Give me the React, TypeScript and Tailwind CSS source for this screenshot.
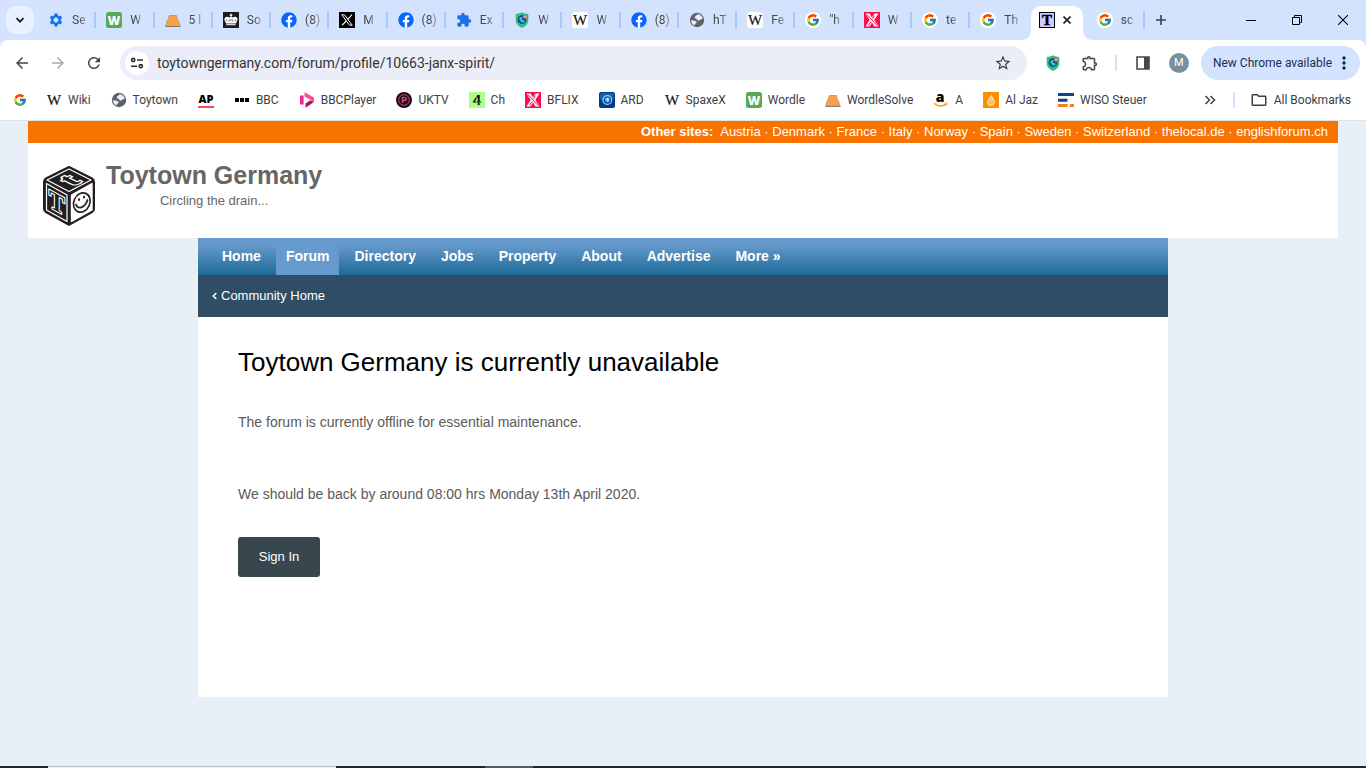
import type { ReactNode } from 'react';
import { FcGoogle } from 'react-icons/fc';
import { FaFacebook } from 'react-icons/fa';
import {
  MdArrowBack,
  MdArrowForward,
  MdExtension,
  MdOutlineExtension,
  MdOutlineFolder,
  MdRefresh,
  MdSettings,
  MdStarOutline,
} from 'react-icons/md';

type IconName =
  | 'settings'
  | 'wordle'
  | 'cone'
  | 'crown'
  | 'facebook'
  | 'x'
  | 'extension'
  | 'shield'
  | 'wikiTile'
  | 'wiki'
  | 'globe'
  | 'googleTile'
  | 'google'
  | 'bflix'
  | 'toytown'
  | 'ap'
  | 'bbc'
  | 'iplayer'
  | 'uktv'
  | 'channel4'
  | 'ard'
  | 'amazon'
  | 'aljazeera'
  | 'wiso';

function Svg({ children }: { children: ReactNode }) {
  return (
    <svg viewBox="0 0 16 16" className="w-4 h-4 shrink-0" aria-hidden="true">
      {children}
    </svg>
  );
}

function WikiLetter() {
  return (
    <text x="8" y="13" textAnchor="middle" fontFamily="Liberation Serif, serif" fontSize="15" stroke="#111" strokeWidth="0.2" fill="#111">
      W
    </text>
  );
}

const icons: Record<IconName, ReactNode> = {
  settings: <MdSettings className="w-4 h-4 shrink-0 text-[#1a73e8]" />,
  extension: <MdExtension className="w-4 h-4 shrink-0 text-[#1a73e8]" />,
  facebook: (
    <span className="w-4 h-4 shrink-0 rounded-full bg-white">
      <FaFacebook className="w-4 h-4 text-[#0866ff]" />
    </span>
  ),
  google: (
    <span className="w-4 h-4 shrink-0 flex items-center justify-center">
      <FcGoogle className="w-[14px] h-[14px]" />
    </span>
  ),
  googleTile: (
    <span className="w-4 h-4 shrink-0 flex items-center justify-center rounded-full bg-white">
      <FcGoogle className="w-[14px] h-[14px]" />
    </span>
  ),
  wordle: (
    <Svg>
      <rect width="16" height="16" rx="2.5" fill="#58a955" />
      <text x="8" y="12.5" textAnchor="middle" fontFamily="Open Sans, sans-serif" fontWeight="800" fontSize="12" fill="#fff">
        W
      </text>
    </Svg>
  ),
  cone: (
    <Svg>
      <path d="M4.3 3.5h7.2l1 5h.8l1.9 5.9H.7l1.6-5.9H3z" fill="#f9a14a" stroke="#c08a5a" strokeWidth="0.8" />
      <path d="M.5 14.5h15" stroke="#8a7b70" strokeWidth="1" />
    </Svg>
  ),
  crown: (
    <Svg>
      <rect width="16" height="16" fill="#1d1d1f" />
      <path d="M3 11.5 1.3 7.2C1.600 4.800 4.300 4 6.300 5.600L8 4.800l1.700.8c2-1.600 4.700-.8 5 1.600L13 11.500z" fill="#fff" />
      <path d="M8 1.800v3M6.700 3.100h2.600" stroke="#fff" strokeWidth="1.2" />
      <path d="M4.200 9.500 3.200 7.300M6.300 9.500V7.300M9.700 9.500V7.300M11.800 9.500l1-2.200M8 9V6.800" stroke="#1d1d1f" strokeWidth="0.6" />
      <path d="M3.3 12.7h9.4" stroke="#fff" strokeWidth="1" />
    </Svg>
  ),
  x: (
    <Svg>
      <rect width="16" height="16" fill="#000" />
      <path d="M2.8 2.8h2.700l7.700 10.400h-2.700z" fill="none" stroke="#fff" strokeWidth="1" />
      <path d="M13 2.600 8.800 7.300M7.200 9 3 13.400" stroke="#fff" strokeWidth="1.1" />
    </Svg>
  ),
  shield: (
    <Svg>
      <path d="M8 .3C6 1.500 3.800 2 1.700 2v6c0 4 2.800 6.500 6.300 7.900 3.500-1.400 6.300-3.900 6.300-7.900V2C12.200 2 10 1.500 8 .3z" fill="#2bc08b" />
      <circle cx="8" cy="7.7" r="4.4" fill="#1a4f7c" />
      <path d="M5 7c1-2 2.500-2.500 3.500-1.800.6.700-1 1.300-.6 2.300.4.900 2.400.3 2.600 1.400.1 1-1.400 1.700-2.400 1.600C6.500 10.300 6.900 8.300 5 7z" fill="#37c5e8" />
      <circle cx="11" cy="4.8" r="2" fill="#f0625f" />
      <path d="M9.9 4.8h2.2" stroke="#fff" strokeWidth="0.7" />
    </Svg>
  ),
  wikiTile: (
    <Svg>
      <rect width="16" height="16" rx="3" fill="#fff" />
      <WikiLetter />
    </Svg>
  ),
  wiki: (
    <Svg>
      <WikiLetter />
    </Svg>
  ),
  globe: (
    <Svg>
      <circle cx="8" cy="8" r="7.2" fill="#5f6368" />
      <path d="M8.300 2.200c2.800 0 4.900 1.800 5.500 4.200-1.400.9-2.200.5-2.900 1.500-.7.900-2.500.6-2.800-.5-.3-1.200-2.400-.6-2.400-2 0-1.600 2.200-1.400 2.600-3.200z" fill="#e8eefb" />
      <path d="M2 8.200c1.800.4 4.300.1 5.300 1.300.8 1 .3 1.900-.7 2.100-1 .3-.8 1.300-.9 2C3.500 12.600 2 10.600 2 8.200z" fill="#e8eefb" />
    </Svg>
  ),
  bflix: (
    <Svg>
      <rect width="16" height="16" fill="#fb0c4f" />
      <path d="M1.500 1.500h4L8 5.500l2.500-4h4L10.300 8l4.200 6.500h-4L8 10.500l-2.500 4h-4L5.700 8z" fill="#fff" />
      <path d="m3 2.500 10 11M10.500 3.500 8.500 7M7.300 9.500l-3 4" stroke="#fb0c4f" strokeWidth="1" />
    </Svg>
  ),
  toytown: (
    <Svg>
      <rect x="0.5" y="0.5" width="15" height="15" fill="#ccccff" stroke="#000" />
      <text x="8" y="13" textAnchor="middle" fontFamily="Liberation Serif, serif" fontWeight="700" fontSize="15" stroke="#000" strokeWidth="0.5">
        T
      </text>
    </Svg>
  ),
  ap: (
    <Svg>
      <text x="8" y="11" textAnchor="middle" fontFamily="Open Sans, sans-serif" fontWeight="800" fontSize="11">
        AP
      </text>
      <path d="M0 15h16" stroke="#ee2e2e" strokeWidth="1.7" />
    </Svg>
  ),
  bbc: (
    <Svg>
      <path d="M1 6h4v4H1zM6 6h4v4H6zM11 6h4v4h-4z" fill="#000" />
    </Svg>
  ),
  iplayer: (
    <Svg>
      <path d="M1 3.500h3.600v9H1z" fill="#f5258f" />
      <path d="M5.500.3 15 5.400v4.300L5.500 4.400z" fill="#ff4c98" />
      <path d="M11.400 8.200 15 10.100l-8.500 5.600v-4.200z" fill="#b01065" />
    </Svg>
  ),
  uktv: (
    <Svg>
      <circle cx="8" cy="8" r="8" fill="#160f2d" />
      <circle cx="8" cy="8" r="5.3" fill="none" stroke="#e5484d" strokeWidth="0.9" />
      <text x="8.2" y="11" textAnchor="middle" fontFamily="Liberation Sans, sans-serif" fontWeight="700" fontSize="8.5" fill="#f2545b">
        P
      </text>
    </Svg>
  ),
  channel4: (
    <Svg>
      <rect width="16" height="16" fill="#aaff89" />
      <text x="8" y="13" textAnchor="middle" fontFamily="Liberation Sans, sans-serif" fontWeight="700" fontSize="15" fill="#111">
        4
      </text>
      <path d="M3 10.600h10M7.600 3v8" stroke="#aaff89" strokeWidth="0.5" />
    </Svg>
  ),
  ard: (
    <Svg>
      <rect width="16" height="16" rx="2" fill="#073a86" />
      <rect x="1" y="1" width="14" height="7" rx="2" fill="#0d62b4" />
      <circle cx="8.3" cy="8" r="4.4" fill="none" stroke="#8fd0f2" strokeWidth="1.2" />
      <circle cx="8.3" cy="8" r="2.4" fill="#45b4ea" />
      <path d="m7.200 7.400 1.800-.9v3.200" stroke="#fff" strokeWidth="0.9" fill="none" />
    </Svg>
  ),
  amazon: (
    <svg viewBox="0 0 16 16" className="w-4 h-4 shrink-0 overflow-visible" aria-hidden="true">
      <text x="7" y="9.5" textAnchor="middle" fontFamily="Open Sans, sans-serif" fontWeight="800" fontSize="14">
        a
      </text>
      <path d="M1 11.300c3.800 3.300 8.600 3.300 12.300.8" fill="none" stroke="#ff9900" strokeWidth="1.5" />
      <path d="M11.500 11.300c1.200-.4 2.500-.3 2.700 0 .2.400-.2 1.500-.9 2.200" fill="none" stroke="#ff9900" strokeWidth="0.9" />
    </svg>
  ),
  aljazeera: (
    <Svg>
      <rect width="16" height="16" fill="#fa9000" />
      <path d="M8.500 1.800c-.2 2.600-4 4.900-4.300 8.200C4 12.700 6 14 8 14s4-1.400 3.900-4c-.1-2.600-3-4.500-3.400-8.200z" fill="#ffdba6" />
      <path d="M8 5.500v7M6 8l1.300 4M10 8l-1.300 4M5 10.500l2 2M11 10.500l-2 2" stroke="#fa9000" strokeWidth="0.6" />
    </Svg>
  ),
  wiso: (
    <Svg>
      <path d="M0 1h16v3H0zM0 6.800h9.500v3H0z" fill="#0b4591" />
      <path d="M0 12h9.500v3H0zM12 12h4v3h-4z" fill="#f58220" />
    </Svg>
  ),
};

const tabs: { icon: IconName; title: string }[] = [
  { icon: 'settings', title: 'Se' },
  { icon: 'wordle', title: 'W' },
  { icon: 'cone', title: '5 l' },
  { icon: 'crown', title: 'So' },
  { icon: 'facebook', title: '(8)' },
  { icon: 'x', title: 'M' },
  { icon: 'facebook', title: '(8)' },
  { icon: 'extension', title: 'Ex' },
  { icon: 'shield', title: 'W' },
  { icon: 'wikiTile', title: 'W' },
  { icon: 'facebook', title: '(8)' },
  { icon: 'globe', title: 'hT' },
  { icon: 'wikiTile', title: 'Fe' },
  { icon: 'googleTile', title: '"h' },
  { icon: 'bflix', title: 'W' },
  { icon: 'googleTile', title: 'te' },
  { icon: 'googleTile', title: 'Th' },
];

const bookmarks: { icon: IconName; label: string }[] = [
  { icon: 'wiki', label: 'Wiki' },
  { icon: 'globe', label: 'Toytown' },
  { icon: 'ap', label: '' },
  { icon: 'bbc', label: 'BBC' },
  { icon: 'iplayer', label: 'BBCPlayer' },
  { icon: 'uktv', label: 'UKTV' },
  { icon: 'channel4', label: 'Ch' },
  { icon: 'bflix', label: 'BFLIX' },
  { icon: 'ard', label: 'ARD' },
  { icon: 'wiki', label: 'SpaxeX' },
  { icon: 'wordle', label: 'Wordle' },
  { icon: 'cone', label: 'WordleSolve' },
  { icon: 'amazon', label: 'A' },
  { icon: 'aljazeera', label: 'Al Jaz' },
  { icon: 'wiso', label: 'WISO Steuer' },
];

const otherSites = ['Austria', 'Denmark', 'France', 'Italy', 'Norway', 'Spain', 'Sweden', 'Switzerland', 'thelocal.de', 'englishforum.ch'];

const navItems = ['Home', 'Forum', 'Directory', 'Jobs', 'Property', 'About', 'Advertise', 'More »'];

function Tab({ icon, title, divider = true }: { icon: IconName; title: string; divider?: boolean }) {
  return (
    <div className="flex-1 min-w-0">
      <button
        type="button"
        className={`w-full h-4 mt-3 pl-[10px] flex items-center gap-2 border-r-2 ${
          divider ? 'border-[#a8c7fa]' : 'border-transparent'
        }`}
      >
        {icons[icon]}
        <span className="whitespace-nowrap leading-4 text-[#474747] [mask-image:linear-gradient(to_right,black_50%,#0006)]">
          {title}
        </span>
      </button>
    </div>
  );
}

function ActiveTab() {
  return (
    <div className="relative flex-1 min-w-0 h-10 flex">
      <div className="mt-[6px] ml-[2px] mr-1 flex-1 rounded-t-[10px] bg-white flex items-center gap-2 pl-2 pb-[6px]">
        {icons.toytown}
        <button type="button" aria-label="Close tab">
          <svg viewBox="0 0 8 8" className="w-2 h-2" stroke="#1f1f1f" strokeWidth="1.6">
            <path d="m.5.5 7 7M7.500.5l-7 7" />
          </svg>
        </button>
      </div>
      <svg viewBox="0 0 10 10" className="absolute bottom-0 -left-2 w-[10px] h-[10px]" aria-hidden="true">
        <path d="M10 0v10H0c6 0 10-4 10-10z" fill="#fff" />
      </svg>
      <svg viewBox="0 0 10 10" className="absolute bottom-0 -right-[6px] w-[10px] h-[10px]" aria-hidden="true">
        <path d="M0 0v10h10C4 10 0 6 0 0z" fill="#fff" />
      </svg>
    </div>
  );
}

function TabStrip() {
  return (
    <div className="flex bg-[#d3e3fd] h-10">
      <button type="button" aria-label="Search tabs" className="ml-[6px] mr-1 mt-[6px] w-7 h-7 rounded-[10px] bg-[#e9f1fe] flex items-center justify-center">
        <svg viewBox="0 0 10 10" className="w-[10px] h-[10px]" fill="none" stroke="#1f1f1f" strokeWidth="1.8">
          <path d="m1.500 3.200 3.500 3.500 3.500-3.500" />
        </svg>
      </button>
      <div className="flex flex-1">
        {tabs.map((tab, i) => (
          <Tab key={i} icon={tab.icon} title={tab.title} divider={i < tabs.length - 1} />
        ))}
        <ActiveTab />
        <Tab icon="googleTile" title="sc" />
      </div>
      <button type="button" aria-label="New tab" className="ml-[2px] mt-[6px] w-7 h-7 flex items-center justify-center">
        <svg viewBox="0 0 12 12" className="w-3 h-3" stroke="#3c4043" strokeWidth="1.6">
          <path d="M6 1v10M1 6h10" />
        </svg>
      </button>
      <div className="w-[53px]" />
      <div className="flex">
        <button type="button" aria-label="Minimize" className="w-[46px] flex items-center justify-center">
          <svg viewBox="0 0 10 10" className="w-[10px] h-[10px]" stroke="#000">
            <path d="M0 5.500h10" />
          </svg>
        </button>
        <button type="button" aria-label="Restore" className="w-[46px] flex items-center justify-center">
          <svg viewBox="0 0 10 10" className="w-[10px] h-[10px]" fill="none" stroke="#000">
            <path d="M.5 2.500h7v7h-7zM2.500 2.500v-2h7v7h-2" />
          </svg>
        </button>
        <button type="button" aria-label="Close window" className="w-[46px] flex items-center justify-center">
          <svg viewBox="0 0 10 10" className="w-[10px] h-[10px]" stroke="#000" strokeWidth="1.1">
            <path d="m0 0 10 10M10 0 0 10" />
          </svg>
        </button>
      </div>
    </div>
  );
}

function Toolbar() {
  return (
    <div className="flex items-center h-[46px] pr-[6px]">
      <div className="w-[120px] flex items-center justify-between pl-[13px] pr-[17px]">
        <button type="button" aria-label="Back">
          <MdArrowBack className="w-[18px] h-[18px] text-[#474747]" />
        </button>
        <button type="button" aria-label="Forward">
          <MdArrowForward className="w-[18px] h-[18px] text-[#ababab]" />
        </button>
        <button type="button" aria-label="Reload">
          <MdRefresh className="w-[18px] h-[18px] text-[#474747]" />
        </button>
      </div>
      <div className="flex-1 flex items-center h-[34px] pl-[5px] pr-[15px] rounded-full bg-[#ebeef8]">
        <button type="button" aria-label="View site information" className="w-6 h-6 rounded-full bg-white flex items-center justify-center">
          <svg viewBox="0 0 14 12" className="w-[14px] h-3" fill="none" stroke="#303134" strokeWidth="1.6">
            <circle cx="3.2" cy="3" r="1.6" />
            <path d="M7 3h6M1 9.200h6" />
            <circle cx="10.8" cy="9.2" r="1.6" />
          </svg>
        </button>
        <input
          type="text"
          aria-label="Address"
          defaultValue="toytowngermany.com/forum/profile/10663-janx-spirit/"
          className="flex-1 ml-2 text-sm text-[#333333] bg-transparent outline-none"
        />
        <button type="button" aria-label="Bookmark this tab">
          <MdStarOutline className="w-[18px] h-[18px] text-[#3c3c3c]" />
        </button>
      </div>
      <div className="flex items-center pl-[18px]">
        <button type="button" aria-label="Web protection">{icons.shield}</button>
        <button type="button" aria-label="Extensions" className="ml-5">
          <MdOutlineExtension className="w-[18px] h-[18px] text-[#474747]" />
        </button>
        <span className="ml-4 w-[2px] h-4 bg-[#d3e3fd]" />
        <button type="button" aria-label="Side panel" className="ml-[19px]">
          <svg viewBox="0 0 14 14" className="w-[14px] h-[14px]">
            <path d="M1 1h12v12H1z" fill="none" stroke="#474747" strokeWidth="1.6" />
            <path d="M8 1h5v12H8z" fill="#474747" />
          </svg>
        </button>
        <button type="button" aria-label="Profile" className="ml-[19px] w-5 h-5 rounded-full bg-[#78909c] text-white text-[11px] leading-5">
          M
        </button>
        <button type="button" className="ml-3 h-[34px] pl-3 pr-[14px] rounded-full bg-[#d3e3fd] text-[#1c2d55] flex items-center gap-[10px] whitespace-nowrap">
          New Chrome available
          <svg viewBox="0 0 4 14" className="w-1 h-[14px]" fill="#0b2458">
            <circle cx="2" cy="2" r="1.7" />
            <circle cx="2" cy="7" r="1.7" />
            <circle cx="2" cy="12" r="1.7" />
          </svg>
        </button>
      </div>
    </div>
  );
}

function BookmarksBar() {
  return (
    <div className="flex items-center h-[34px] pb-[6px] pl-3 pr-[15px] text-[#3c4043]">
      <a href="#" aria-label="Google">{icons.google}</a>
      <div className="flex items-center gap-5 ml-[18px]">
        {bookmarks.map((b, i) => (
          <a key={i} href="#" aria-label={b.label || 'AP'} className="flex items-center gap-[6px] whitespace-nowrap">
            {icons[b.icon]}
            {b.label && <span>{b.label}</span>}
          </a>
        ))}
      </div>
      <button type="button" aria-label="More bookmarks" className="ml-auto">
        <svg viewBox="0 0 12 10" className="w-3 h-[10px]" fill="none" stroke="#474747" strokeWidth="1.6">
          <path d="m1.500 1 4 4-4 4M6.500 1l4 4-4 4" />
        </svg>
      </button>
      <span className="ml-[17px] w-[2px] h-4 bg-[#d3e3fd]" />
      <button type="button" className="ml-[15px] flex items-center gap-[6px] whitespace-nowrap">
        <MdOutlineFolder className="w-[18px] h-[18px]" />
        All Bookmarks
      </button>
    </div>
  );
}

function Logo() {
  return (
    <svg viewBox="0 0 54 60" className="w-[54px] h-[60px]" aria-label="Toytown Germany logo">
      <path d="M27 1 50 12.500q2 1 2 3.500v27q0 2-2 3.200L27 59 4 46.200Q2 45 2 43V16q0-2.500 2-3.500z" fill="#231f20" stroke="#231f20" strokeWidth="2" strokeLinejoin="round" />
      <path d="M27 3 49 14 27 25.500 5 14z" fill="none" stroke="#fff" strokeWidth="1.2" strokeLinejoin="round" />
      <path d="M4.500 17.500 25 29v26.500L4.500 44z" fill="none" stroke="#fff" strokeWidth="1.2" strokeLinejoin="round" />
      <path d="M29.500 29 50 17.500v26.500L29.500 55.500z" fill="#fff" stroke="#fff" strokeWidth="1.4" strokeLinejoin="round" />
      <ellipse cx="39.8" cy="36.5" rx="8" ry="10" transform="rotate(24 39.8 36.5)" fill="none" stroke="#231f20" strokeWidth="1.7" />
      <path d="M34 38.500c1.500 5.500 9 3.500 11.500-4.500" fill="none" stroke="#231f20" strokeWidth="1.8" strokeLinecap="round" />
      <ellipse cx="37" cy="33.5" rx="1" ry="1.5" fill="#231f20" />
      <ellipse cx="42" cy="31" rx="1" ry="1.5" fill="#231f20" />
      <text
        transform="matrix(0.9 0.5 0 1 14.7 45)"
        fontFamily="Liberation Serif, serif"
        fontWeight="700"
        fontSize="26"
        textAnchor="middle"
        fill="#231f20"
        stroke="#fff"
        strokeWidth="2.4"
        paintOrder="stroke"
      >
        T
      </text>
      <text
        transform="matrix(1.1 -0.55 1 0.5 35 18)"
        fontFamily="Liberation Serif, serif"
        fontWeight="700"
        fontSize="25"
        textAnchor="middle"
        fill="#231f20"
        stroke="#fff"
        strokeWidth="2.6"
        paintOrder="stroke"
      >
        t
      </text>
    </svg>
  );
}

function SiteHeader() {
  return (
    <header className="mx-7 bg-white">
      <div className="bg-[#f97300] min-h-[22px] pr-[10px] text-right text-white text-[13px] leading-[22px]">
        <b>Other sites:</b>
        <span className="ml-[7px]">
          {otherSites.map((site, i) => (
            <span key={site}>
              {i > 0 && ' · '}
              <a href="#">{site}</a>
            </span>
          ))}
        </span>
      </div>
      <div className="flex h-[95px] pt-4 pl-[14px]">
        <div className="pt-[7px]">
          <Logo />
        </div>
        <div className="ml-[10px] text-center text-[#666666]">
          <h1 className="text-[25px] leading-8 font-bold">Toytown Germany</h1>
          <p className="text-[13px] leading-5">Circling the drain...</p>
        </div>
      </div>
    </header>
  );
}

function SiteNav() {
  return (
    <nav className="flex items-end gap-[5px] h-[37px] pl-[14px] text-white text-sm font-bold bg-[linear-gradient(#6699cc_0px,#6699cc_7px,#1c6a96_37px)]">
      {navItems.map((item) => (
        <a
          key={item}
          href="#"
          className={`px-[10px] h-full leading-[37px] ${item === 'Forum' ? 'bg-[#6699cc]' : ''}`}
        >
          {item}
        </a>
      ))}
    </nav>
  );
}

export default function App() {
  return (
    <div className="min-h-screen flex flex-col bg-[#e8eff7] font-['Liberation_Sans',Arial,sans-serif]">
      <div className="bg-[#d3e3fd] text-xs font-[Roboto,'Segoe_UI',sans-serif]">
        <TabStrip />
        <div className="bg-white rounded-t-lg border-b border-[#dfe3e6]">
          <Toolbar />
          <BookmarksBar />
        </div>
      </div>

      <div className="flex-1">
        <SiteHeader />
        <main className="max-w-[970px] mx-auto bg-white">
          <SiteNav />
          <div className="flex items-center h-[42px] px-[14px] bg-[#2f4d65] text-white text-[13px]">
            <a href="#" className="flex items-center gap-1">
              <svg viewBox="0 0 5 8" className="w-[5px] h-2" fill="none" stroke="#fff" strokeWidth="1.5">
                <path d="M4.300 1 1.300 4l3 3" />
              </svg>
              Community Home
            </a>
          </div>
          <div className="px-10 pt-[29px] pb-[120px] text-sm text-[#5a5a5a]">
            <h2 className="text-[26px] leading-8 text-black">Toytown Germany is currently unavailable</h2>
            <p className="mt-[34px] leading-5">The forum is currently offline for essential maintenance.</p>
            <p className="mt-[52px] leading-5">We should be back by around 08:00 hrs Monday 13th April 2020.</p>
            <button type="button" className="mt-[33px] w-[82px] h-10 rounded-[3px] bg-[#38464e] text-white text-[13px]">
              Sign In
            </button>
          </div>
        </main>
      </div>

      <div className="flex h-[2px] bg-[#23282b]">
        <div className="ml-12 w-72 border-t border-[#b9bec2] bg-[#f1f3f4]" />
        <div className="ml-[149px] w-12 bg-[#565b5e]" />
      </div>
    </div>
  );
}
